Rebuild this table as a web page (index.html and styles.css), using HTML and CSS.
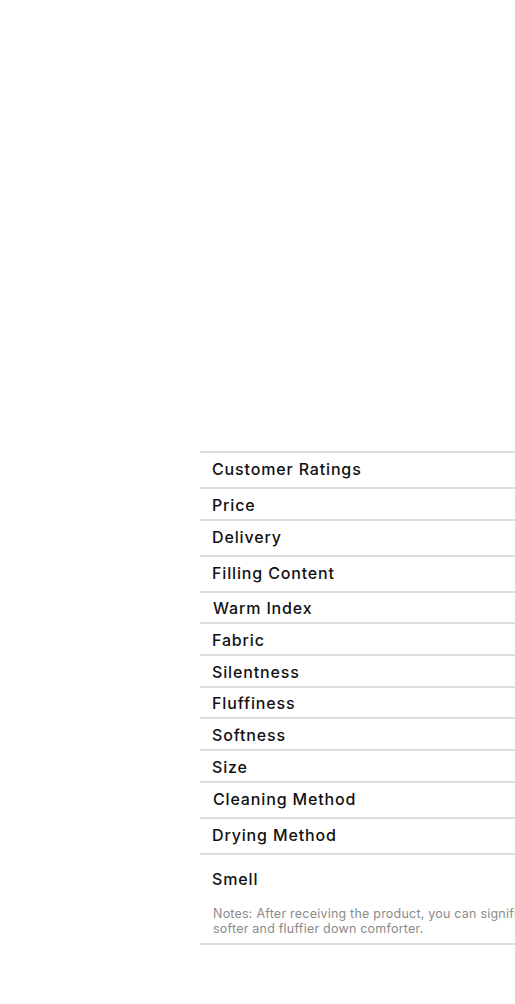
FILE: index.html
```html
<!DOCTYPE html>
<html>
<head>
<meta charset="utf-8">
<link rel="stylesheet" href="styles.css">
</head>
<body>
<div class="page">
  <div class="table">
    <div class="row r34"><span class="label">Customer Ratings</span></div>
    <div class="row r30"><span class="label">Price</span></div>
    <div class="row r34"><span class="label">Delivery</span></div>
    <div class="row r34"><span class="label">Filling Content</span></div>
    <div class="row r29"><span class="label shift">Warm Index</span></div>
    <div class="row r30"><span class="label">Fabric</span></div>
    <div class="row r30"><span class="label">Silentness</span></div>
    <div class="row r29"><span class="label">Fluffiness</span></div>
    <div class="row r30"><span class="label">Softness</span></div>
    <div class="row r30"><span class="label">Size</span></div>
    <div class="row r34"><span class="label shift">Cleaning Method</span></div>
    <div class="row r34"><span class="label">Drying Method</span></div>
    <div class="row smell">
      <span class="label">Smell</span>
      <p class="note">Notes: After receiving the product, you can significantly improve its loft by patting and shaking it to get a<br>softer and fluffier down comforter.</p>
    </div>
  </div>
</div>
</body>
</html>
```

FILE: styles.css
```css
html, body {
  margin: 0;
  padding: 0;
  background: #ffffff;
  overflow: hidden;
}
.page {
  width: 515px;
  height: 1004px;
  overflow: hidden;
  padding-top: 451px;
  padding-left: 200px;
  box-sizing: border-box;
}
.table {
  width: 760px;
  border-top: 2px solid #dddddd;
  font-family: Inter, "Liberation Sans", sans-serif;
}
.row {
  display: flex;
  align-items: center;
  padding-left: 12px;
  border-bottom: 2px solid #dddddd;
  box-sizing: border-box;
}
.r34 { height: 36px; padding-bottom: 2px; }
.r30 { height: 32px; padding-top: 1px; }
.r29 { height: 31px; padding-top: 1px; }
.label {
  font-size: 16px;
  font-weight: 550;
  color: #111111;
  letter-spacing: 0.85px;
}
.shift { margin-left: 1px; }
.smell {
  height: 90px;
  flex-direction: column;
  align-items: flex-start;
  justify-content: flex-start;
}
.smell .label {
  margin-top: 14px;
  line-height: 20px;
}
.note {
  margin: 17px 0 0 1px;
  font-size: 12.5px;
  line-height: 15px;
  color: #8a8a8a;
  letter-spacing: 0.22px;
  white-space: nowrap;
}
```
